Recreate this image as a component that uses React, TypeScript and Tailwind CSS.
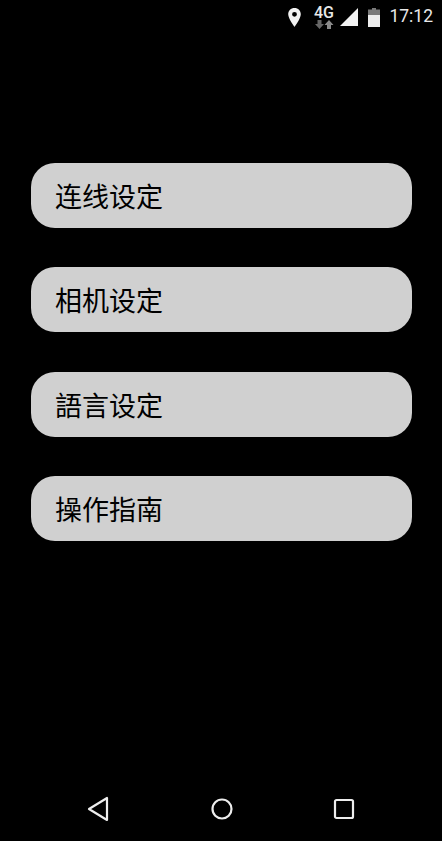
const cjk = "font-['Noto_Sans_CJK_SC','Noto_Sans_CJK_TC',sans-serif]";

const menuItems = ["连线设定", "相机设定", "語言设定", "操作指南"];

function StatusBar() {
  return (
    <div className="flex h-[33px] items-center justify-end pr-[9px] text-[#e8e8e8]">
      <svg width="15" height="21" viewBox="0 0 14 20" className="mr-[11px] mt-[1px]">
        <path
          fill="#f2f2f2"
          fillRule="evenodd"
          d="M7 1C3.500 1 1 3.600 1 7c0 4.200 6 12 6 12s6-7.800 6-12c0-3.400-2.500-6-6-6zm0 8.300A2.300 2.300 0 1 1 7 4.700a2.300 2.300 0 0 1 0 4.600z"
        />
      </svg>
      <div className="mr-[6px] flex w-[21px] flex-col items-center">
        <span className="font-['Roboto',sans-serif] text-[16px] leading-[15px] font-medium text-[#e8e8e8]">4G</span>
        <svg width="20" height="9" viewBox="0 0 20 9">
          <path fill="#666" d="M3.500 0h4v4h2.500L5.500 9 1 4h2.500z" />
          <path fill="#8a8a8a" d="M15 0l4.500 5H17v4h-4V5h-2.500z" />
        </svg>
      </div>
      <svg width="18" height="18" viewBox="0 0 18 18" className="mr-[10px] mt-[1px]">
        <path fill="#f2f2f2" d="M18 0v18H0z" />
      </svg>
      <svg width="12" height="19" viewBox="0 0 12 19" className="mr-[9px] mt-[1px]">
        <path fill="#7a7a7a" d="M4 0h4v1.500h4V7H0V1.500h4z" />
        <path fill="#ededed" d="M0 7h12v12H0z" />
      </svg>
      <span className="font-['Roboto',sans-serif] text-[17.5px] leading-none text-[#e8e8e8]">17:12</span>
    </div>
  );
}

function MenuButton({ label }: { label: string }) {
  return (
    <button
      className={`flex h-[65px] w-[381px] items-center rounded-[24px] bg-[#d0d0d0] pl-[24px] text-[27px] leading-none text-black ${cjk}`}
    >
      {label}
    </button>
  );
}

function NavBar() {
  return (
    <div className="flex h-[64px] items-center justify-between pl-[87px] pr-[87px]">
      <svg width="22" height="26" viewBox="0 0 22 26">
        <path
          fill="none"
          stroke="#ededed"
          strokeWidth="2.200"
          strokeLinejoin="round"
          d="M20 2v22L2 13z"
        />
      </svg>
      <svg width="22" height="22" viewBox="0 0 22 22" className="ml-[1px]">
        <circle cx="11" cy="11" r="9.500" fill="none" stroke="#ededed" strokeWidth="2.200" />
      </svg>
      <svg width="22" height="22" viewBox="0 0 22 22">
        <rect x="2" y="2" width="18" height="18" rx="1.500" fill="none" stroke="#ededed" strokeWidth="2.200" />
      </svg>
    </div>
  );
}

export default function App() {
  return (
    <div className="flex h-[841px] w-[442px] flex-col overflow-hidden bg-black">
      <StatusBar />
      <div className="flex flex-1 flex-col gap-[39.4px] pl-[31px] pt-[130px]">
        {menuItems.map((item) => (
          <MenuButton key={item} label={item} />
        ))}
      </div>
      <NavBar />
    </div>
  );
}
